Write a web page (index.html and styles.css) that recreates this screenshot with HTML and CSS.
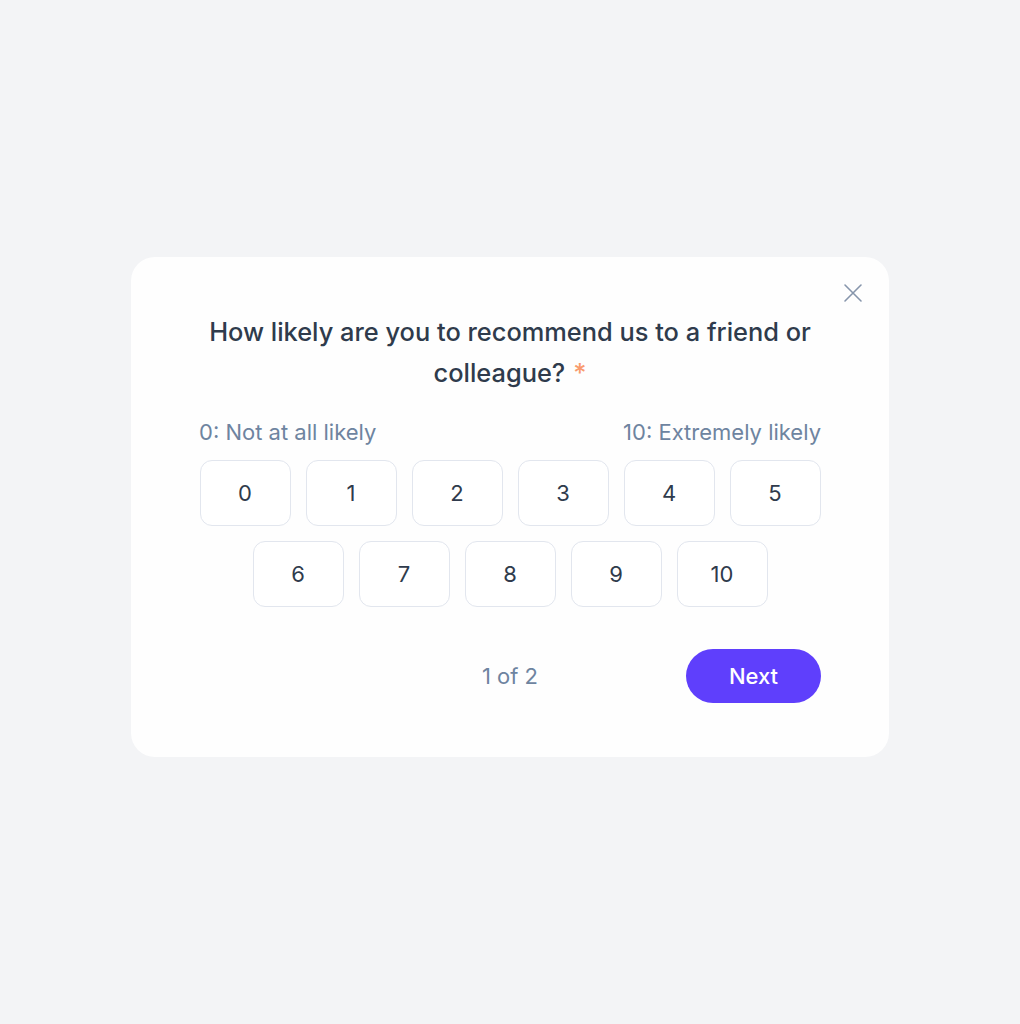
FILE: index.html
```html
<!DOCTYPE html>
<html lang="en">
<head>
    <meta charset="UTF-8">
    <meta name="viewport" content="width=device-width, initial-scale=1.0">
    <title>Survey</title>
    <link rel="stylesheet" href="styles.css">
</head>
<body>
    <div class="survey-card">
        <!-- close button -->
        <button class="close-btn" aria-label="Close">
            <svg width="20" height="20" viewBox="0 0 20 20" fill="none" stroke="#8695ab" stroke-width="1.6" stroke-linecap="round">
                <path d="M2 2 L18 18 M18 2 L2 18"/>
            </svg>
        </button>

        <h2 class="question">How likely are you to recommend us to a friend or colleague?<span class="required">*</span></h2>

        <div class="scale-labels">
            <span>0: Not at all likely</span>
            <span>10: Extremely likely</span>
        </div>

        <div class="scale">
            <button class="score">0</button>
            <button class="score">1</button>
            <button class="score">2</button>
            <button class="score">3</button>
            <button class="score">4</button>
            <button class="score">5</button>
            <button class="score">6</button>
            <button class="score">7</button>
            <button class="score">8</button>
            <button class="score">9</button>
            <button class="score">10</button>
        </div>

        <div class="footer">
            <span></span>
            <span class="progress">1 of 2</span>
            <button class="next-btn">Next</button>
        </div>
    </div>
</body>
</html>
```

FILE: styles.css
```css
body {
    margin: 0;
    background-color: #f3f4f6;
    font-family: Inter, "Noto Sans", sans-serif;
    height: 1024px;
    display: flex;
    justify-content: center;
    align-items: flex-start;
}
.survey-card {
    position: relative;
    margin-top: 257px;
    width: 758px;
    box-sizing: border-box;
    padding: 54px 68px 54px;
    background-color: #fefefe;
    border-radius: 24px;
}
.close-btn {
    position: absolute;
    top: 26px;
    right: 26px;
    width: 20px;
    height: 20px;
    padding: 0;
    border: none;
    background: none;
    cursor: pointer;
}
.close-btn svg {
    display: block;
}
.question {
    margin: 0 auto;
    max-width: 622px;
    text-align: center;
    font-size: 25.4px;
    line-height: 41px;
    font-weight: 500;
    color: #2f3b4c;
}
.required {
    margin-left: 8px;
    color: #f99b6e;
}
.scale-labels {
    display: flex;
    justify-content: space-between;
    margin-top: 26px;
    font-size: 22px;
    line-height: 26px;
    color: #6e84a0;
}
.scale {
    margin-top: 15px;
    display: flex;
    flex-wrap: wrap;
    justify-content: center;
    gap: 15px;
}
.score {
    width: 91px;
    height: 66px;
    box-sizing: border-box;
    border: 1.5px solid #e2e6ee;
    border-radius: 12px;
    background-color: #fff;
    font-family: inherit;
    font-size: 22px;
    color: #2f3b4c;
    cursor: pointer;
}
.score:hover {
    border-color: #c9cfdb;
}
.footer {
    margin-top: 42px;
    display: grid;
    grid-template-columns: 1fr auto 1fr;
    align-items: center;
}
.progress {
    font-size: 22px;
    color: #6e84a0;
}
.next-btn {
    justify-self: end;
    width: 135px;
    height: 54px;
    border: none;
    border-radius: 27px;
    background-color: #5f3ffc;
    color: #fff;
    font-family: inherit;
    font-size: 22px;
    font-weight: 500;
    cursor: pointer;
}
```
